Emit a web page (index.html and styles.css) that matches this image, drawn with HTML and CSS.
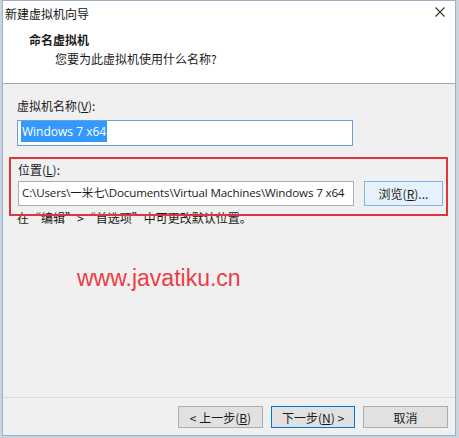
FILE: index.html
```html
<!DOCTYPE html>
<html>
<head>
<meta charset="utf-8">
<link rel="stylesheet" href="styles.css">
</head>
<body>
<div class="window">
  <div class="titlebar">
    <span class="title">新建虚拟机向导</span>
    <svg class="close" width="10" height="10" viewBox="0 0 10 10"><path d="M0.5 0.5L9.5 9.5M9.5 0.5L0.5 9.5" stroke="#333" stroke-width="1.1" fill="none"/></svg>
  </div>
  <div class="header">
    <div class="h-title">命名虚拟机</div>
    <div class="h-sub">您要为此虚拟机使用什么名称?</div>
  </div>
  <div class="content">
    <div class="name-section">
      <div class="label">虚拟机名称(<u>V</u>):</div>
      <div class="input focused"><span class="sel">Windows 7 x64</span></div>
    </div>
    <div class="location">
      <div class="label">位置(<u>L</u>):</div>
      <div class="loc-row">
        <div class="input path">C:\Users\一米七\Documents\Virtual Machines\Windows 7 x64</div>
        <div class="btn browse">浏览(<u>R</u>)...</div>
      </div>
    </div>
    <div class="hint">在“编辑”&gt;“首选项”中可更改默认位置。</div>
    <div class="watermark">www.javatiku.cn</div>
  </div>
  <div class="footer">
    <div class="btn">&lt; 上一步(<u>B</u>)</div>
    <div class="btn primary">下一步(<u>N</u>) &gt;</div>
    <div class="btn">取消</div>
  </div>
</div>
</body>
</html>
```

FILE: styles.css
```css
* { box-sizing: border-box; }
html, body { margin: 0; padding: 0; }
body {
  width: 459px;
  height: 438px;
  background: #c9d3dd;
  font-family: "Noto Sans CJK SC", "Noto Sans", sans-serif;
  font-size: 12px;
  color: #1a1a1a;
  overflow: hidden;
}
.window {
  margin-left: 2px;
  width: 454px;
  height: 436px;
  border: 1px solid #9db0c6;
  background: #f0f0f0;
  display: flex;
  flex-direction: column;
  position: relative;
}
.titlebar {
  height: 28px;
  background: #fff;
  display: flex;
  align-items: center;
  justify-content: space-between;
  padding: 0 10px 2px 2px;
}
.title { font-size: 12px; line-height: 16px; color: #111; }
.close { margin-top: -4px; }
.header {
  height: 55px;
  background: #fff;
  border-bottom: 1px solid #a8a8a8;
  padding: 3px 0 0 26px;
}
.h-title { font-weight: bold; font-size: 12px; line-height: 16px; }
.h-sub { font-size: 12px; line-height: 16px; margin-top: 3px; padding-left: 26px; }
.content {
  flex: 1;
  padding: 14px 0 0 6px;
  position: relative;
}
.name-section { padding-left: 8px; }
.label { line-height: 16px; }
u { text-decoration: underline; text-underline-offset: 1px; }
.input {
  height: 26px;
  width: 336px;
  background: #fff;
  border: 1px solid #abadb3;
  font-family: "Open Sans", "Noto Sans CJK SC", sans-serif;
  font-size: 12px;
  line-height: 22px;
  padding-left: 3px;
  white-space: nowrap;
  overflow: hidden;
}
.name-section .input { margin-top: 6px; }
.input.focused { border-color: #6aa1dc; }
.sel { background: #3399ff; color: #fff; padding: 2px 1px; }
.location {
  margin-top: 11px;
  width: 439px;
  border: 2px solid #e2343d;
  padding: 3px 0 8px 7px;
  position: relative;
  z-index: 1;
}
.loc-row { display: flex; gap: 10px; margin-top: 3px; }
.input.path { height: 25px; letter-spacing: -0.15px; font-size: 11.6px; }
.btn {
  height: 22px;
  width: 85px;
  border: 1px solid #adadad;
  background: #e1e1e1;
  display: flex;
  align-items: center;
  justify-content: center;
  font-size: 12px;
  color: #1a1a1a;
}
.btn.browse {
  width: 79px;
  height: 25px;
  border-color: #7fb5e8;
  background: #e5f1fb;
}
.hint { margin-top: -6px; padding-left: 8px; line-height: 16px; }
.watermark {
  position: absolute;
  left: 74px;
  top: 181px;
  font-family: "Liberation Sans", Arial, sans-serif;
  font-size: 23px;
  color: #ec3d47;
  letter-spacing: 0;
}
.footer {
  height: 38px;
  border-top: 1px solid #dadada;
  display: flex;
  justify-content: flex-end;
  gap: 8px;
  padding: 8px 7px 0 0;
}
.footer .btn.primary { border-color: #0078d7; width: 84px; }
```
